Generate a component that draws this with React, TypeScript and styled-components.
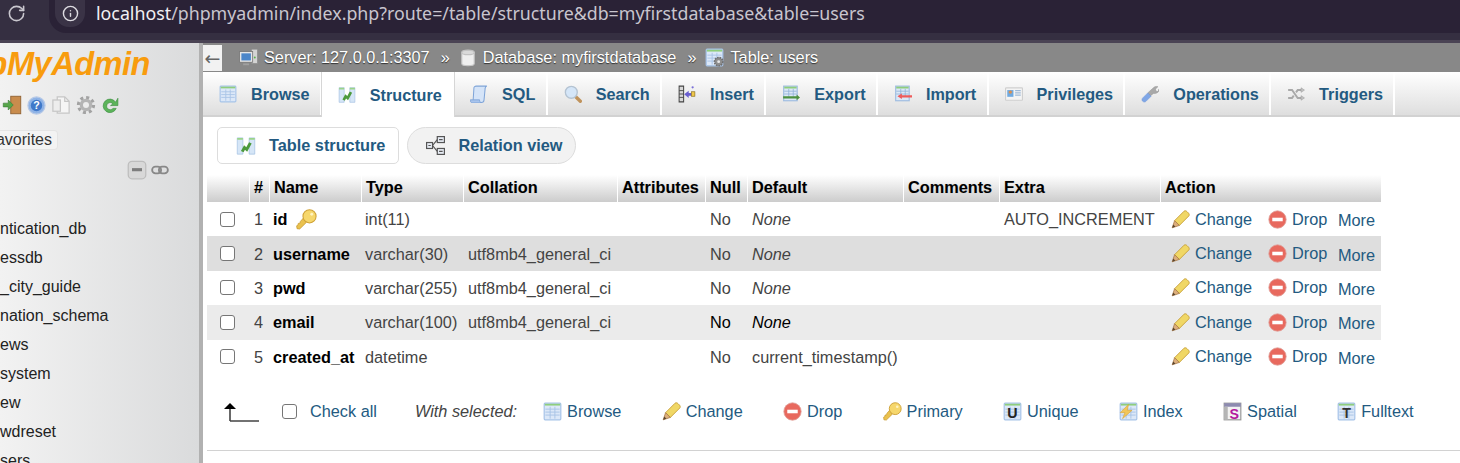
import React from 'react';
import styled, { createGlobalStyle } from 'styled-components';
import { Info, RotateCw } from 'lucide-react';

const GlobalStyle = createGlobalStyle`
    html, body {
        margin: 0;
        padding: 0;
        background: #fff;
        overflow: hidden;
    }
    body {
        font-family: "Liberation Sans", Arial, sans-serif;
        font-size: 16.3px;
    }
`;

const Page = styled.div`
    width: 1460px;
    height: 463px;
    overflow: hidden;
    display: flex;
    flex-direction: column;
`;

const BrowserBar = styled.div`
    height: 40px;
    border-bottom: 3px solid #4a4354;
    background: #352f41;
    display: flex;
    align-items: flex-start;
    flex-shrink: 0;
`;

const ReloadButton = styled.div`
    width: 49px;
    height: 27px;
    padding-left: 7px;
    display: flex;
    align-items: center;
    color: #c9c7ce;
    box-sizing: border-box;
`;

const UrlPill = styled.div`
    flex: 1;
    height: 33px;
    background: #2a2236;
    border-radius: 0 0 0 17px;
    display: flex;
    align-items: flex-start;
    padding-left: 6px;
`;

const InfoBadge = styled.div`
    width: 30px;
    height: 27px;
    border-radius: 0 0 14px 14px;
    background: #3a3346;
    color: #dedce2;
    display: flex;
    align-items: center;
    justify-content: center;
    margin-right: 11px;
`;

const UrlText = styled.div`
    font-family: "Noto Sans", sans-serif;
    font-size: 17.8px;
    line-height: 27px;
    color: #c8c5ce;
    white-space: nowrap;
    b {
        font-weight: 400;
        color: #f1f0f3;
    }
`;

const Body = styled.div`
    flex: 1;
    display: flex;
    min-height: 0;
`;

const Sidebar = styled.aside`
    width: 199px;
    flex-shrink: 0;
    border-right: 4px solid #b1b1b1;
    background: linear-gradient(90deg, #f2f2f2, #dadbdc);
    overflow: hidden;
    display: flex;
    flex-direction: column;
    font-size: 16px;
`;

const Logo = styled.div`
    height: 38px;
    margin-top: 2px;
    padding-right: 49px;
    display: flex;
    justify-content: flex-end;
    align-items: center;
    font-size: 32.6px;
    font-weight: 700;
    font-style: italic;
    letter-spacing: -0.5px;
    color: #f89c0e;
    white-space: nowrap;
`;

const QuickIcons = styled.div`
    display: flex;
    gap: 5px;
    margin: 12px 0 0 2px;
    height: 22px;
    align-items: center;
`;

const FavoritesButton = styled.div`
    width: 58px;
    height: 29px;
    margin-top: 15px;
    box-sizing: border-box;
    background: #f3f3f3;
    border: 1px solid #e4e4e4;
    border-left: none;
    border-radius: 0 4px 4px 0;
    display: flex;
    align-items: center;
    justify-content: flex-end;
    padding-right: 5px;
    color: #333;
`;

const TreeControls = styled.div`
    display: flex;
    gap: 4px;
    margin: 10px 0 0 127px;
    height: 20px;
    align-items: center;
`;

const DbList = styled.ul`
    list-style: none;
    margin: 34px 0 0;
    padding: 0;
`;

const DbItem = styled.li`
    height: 29px;
    line-height: 29px;
    color: #222;
    white-space: nowrap;
`;

const Main = styled.main`
    flex: 1;
    min-width: 0;
    display: flex;
    flex-direction: column;
`;

const TopBar = styled.div`
    height: 29px;
    background: #888;
    display: flex;
    align-items: center;
    flex-shrink: 0;
    color: #fff;
    text-shadow: 0 1px 1px #333;
`;

const CollapseArrow = styled.div`
    width: 19px;
    height: 26px;
    background: #f2f2f2;
    color: #666;
    text-shadow: none;
    font-family: "DejaVu Sans", sans-serif;
    font-size: 19px;
    line-height: 26px;
    display: flex;
    align-items: center;
    justify-content: center;
    overflow: hidden;
    margin-right: 17px;
`;

const Crumb = styled.div`
    display: flex;
    align-items: center;
    gap: 6px;
    white-space: nowrap;
`;

const CrumbSep = styled.span`
    margin: 0 9px 0 11px;
`;

const TabBar = styled.nav`
    height: 45px;
    display: flex;
    background: linear-gradient(#fff, #dedede);
    border-bottom: 2px solid #d2d2d2;
    box-sizing: border-box;
    flex-shrink: 0;
    font-size: 16.2px;
`;

const Tab = styled.div<{ $active?: boolean }>`
    display: flex;
    align-items: center;
    gap: 14px;
    padding: 1px 10.3px 0 16px;
    box-sizing: border-box;
    border-right: 2px solid #fff;
    font-weight: 700;
    color: #235a81;
    white-space: nowrap;
    background: ${props => (props.$active ? '#fff' : 'transparent')};
    height: ${props => (props.$active ? '45px' : '43px')};
    box-shadow: ${props => (props.$active ? '-1px 0 0 #d6d6d6, 1px 0 0 #d6d6d6' : 'none')};
    z-index: ${props => (props.$active ? 1 : 0)};
`;

const SubTabs = styled.div`
    display: flex;
    gap: 8px;
    margin: 10px 0 0 14px;
`;

const SubTab = styled.div<{ $pill?: boolean }>`
    height: 37px;
    box-sizing: border-box;
    display: flex;
    align-items: center;
    gap: 13px;
    padding: 0 13px 0 18px;
    border: 1px solid #ddd;
    border-radius: ${props => (props.$pill ? '19px' : '5px')};
    background: ${props => (props.$pill ? '#f2f2f2' : '#fff')};
    font-weight: 700;
    color: #235a81;
`;

const COLUMNS = '42px 20px 92px 102px 154px 88px 42px 156px 96px 161px 221px';

const Table = styled.div`
    margin: 11px 0 0 4px;
    width: 1174px;
`;

const HeadRow = styled.div`
    display: grid;
    grid-template-columns: ${COLUMNS};
    height: 27px;
`;

const HeadCell = styled.div`
    display: flex;
    align-items: center;
    padding: 0 0 2px 4px;
    font-weight: 700;
    color: #000;
    background: linear-gradient(#fff, #ccc);
    border-left: 1px solid #fff;
    white-space: nowrap;
    text-shadow: 0 0 1px rgba(0, 0, 0, 0.15);
    box-sizing: border-box;
    &:first-child {
        border-left: none;
    }
`;

const Row = styled.div<{ $bg: string }>`
    display: grid;
    grid-template-columns: ${COLUMNS};
    height: 34.4px;
    background: ${props => props.$bg};
    color: #444;
`;

const Cell = styled.div<{ $bold?: boolean; $italic?: boolean; $dark?: boolean; $tight?: boolean }>`
    display: flex;
    align-items: center;
    padding: 1px 0 0 ${props => (props.$tight ? 4 : 5)}px;
    white-space: nowrap;
    font-weight: ${props => (props.$bold ? 700 : 400)};
    font-style: ${props => (props.$italic ? 'italic' : 'normal')};
    color: ${props => (props.$bold || props.$dark ? '#000' : 'inherit')};
`;

const CheckCell = styled.div`
    display: flex;
    align-items: center;
    padding-left: 13px;
`;

const Check = styled.input.attrs({ type: 'checkbox' })`
    appearance: none;
    width: 15px;
    height: 15px;
    margin: 0;
    background: #fff;
    border: 1px solid #767676;
    border-radius: 3px;
    box-sizing: border-box;
    flex-shrink: 0;
`;

const KeyMark = styled.span`
    display: flex;
    margin-left: 9px;
`;

const ActionCell = styled.div`
    display: flex;
    align-items: center;
    padding-left: 11px;
    color: #235a81;
    white-space: nowrap;
`;

const ActionLink = styled.span<{ $width: number }>`
    display: flex;
    align-items: center;
    gap: 5px;
    width: ${props => props.$width}px;
`;

const MoreLink = styled.span`
    margin-top: 3px;
`;

const BulkBar = styled.div`
    display: flex;
    align-items: center;
    height: 30px;
    margin: 23px 0 0 4px;
    padding: 0 0 0 16px;
    color: #235a81;
    white-space: nowrap;
`;

const CheckAll = styled.label`
    display: flex;
    align-items: center;
    gap: 13px;
    margin: 0 38px 0 23px;
`;

const WithSelected = styled.em`
    color: #444;
    margin-right: 26px;
`;

const BulkActions = styled.div`
    display: flex;
    gap: 40.3px;
`;

const BulkAction = styled.span`
    display: flex;
    align-items: center;
    gap: 5px;
`;

const BottomRule = styled.div`
    height: 1px;
    background: #d2d2d2;
    margin: 23px 0 0 4px;
`;

const tableGrid = (
    <>
        <rect x="1" y="1" width="14" height="14" rx="0.8" fill="#dce8f8" stroke="#a6c3e8" />
        <rect x="1.5" y="1.5" width="13" height="1.5" fill="#8fce7d" />
        <path d="M2 6h12M2 8.500h12M2 11h12M6 4v10M10 4v10" stroke="#a9c4e6" strokeWidth="0.8" />
    </>
);

const ICONS: Record<string, React.ReactNode> = {
    browse: tableGrid,
    structure: (
        <>
            <path d="M1 1.500h4.500v13H1zM10.500 1.500H15v13h-4.500z" fill="#d6e6f7" stroke="#a5c1e3" strokeWidth="0.6" />
            <path d="M1 1.500h4.500V3H1zM10.500 1.500H15V3h-4.500z" fill="#9ad488" />
            <path d="M5 12.500l1.800-3.300 1.800 1.600L11.500 5.500" fill="none" stroke="#4c9a3c" strokeWidth="2.4" />
        </>
    ),
    sql: (
        <>
            <path d="M3.500 2.500c0-1 1-1.500 2-1.500H15c-1 0-1.500.8-1.500 1.800L12.500 13c0 1.500-1 2.500-2.500 2.500H1.500c1 0 1.300-1 1.300-2z" fill="#d5e4f8" stroke="#7ea4d8" strokeWidth="0.9" />
            <path d="M1.500 15.500c-1 0-1.500-1-1.200-2.300h8.200c-.2 1.300.5 2.300 1.500 2.300" fill="#a9c4ec" stroke="#7ea4d8" strokeWidth="0.8" />
        </>
    ),
    search: (
        <>
            <path d="M10 10l4.500 4.500" stroke="#c0935c" strokeWidth="3" strokeLinecap="round" />
            <circle cx="6.5" cy="6.5" r="5.3" fill="#d5e6f8" stroke="#b4c3d2" strokeWidth="1.2" />
        </>
    ),
    insert: (
        <>
            <path d="M1 1h4v14H1z" fill="#d8d8d8" stroke="#444" strokeWidth="0.9" />
            <path d="M1 5h4M1 8h4M1 11h4" stroke="#444" strokeWidth="0.8" />
            <path d="M9.500 5v2H12v2.500H9.500v2L5.500 8.200z" fill="#6a5fd0" />
            <rect x="12" y="6" width="3" height="4" fill="#f1c74a" stroke="#8a7120" strokeWidth="0.6" />
            <circle cx="13" cy="2" r="1" fill="#7a6fd8" />
        </>
    ),
    export: (
        <>
            <rect x="1.5" y="1" width="12" height="13" fill="#dbe8f7" stroke="#9dbbe0" />
            <rect x="2" y="1.5" width="11" height="1.6" fill="#8fce7d" />
            <path d="M2 5.500h11M2 8h11M6 3.500v7M10 3.500v7" stroke="#8fb0d8" strokeWidth="0.7" />
            <path d="M1 10h12V8.500l3 2.500-3 2.500V12H1z" fill="#4d9140" />
        </>
    ),
    import: (
        <>
            <rect x="1.5" y="1" width="12" height="13" fill="#dbe8f7" stroke="#9dbbe0" />
            <rect x="2" y="1.5" width="11" height="1.6" fill="#8fce7d" />
            <path d="M2 5.500h11M2 8h11M6 3.500v7M10 3.500v7" stroke="#8fb0d8" strokeWidth="0.7" />
            <path d="M16 9H7V7.500L3 10l4 2.500V11h9z" fill="#ee5b5b" />
        </>
    ),
    privileges: (
        <>
            <rect x="0.5" y="2.5" width="15" height="11" rx="0.5" fill="#f4f4f4" stroke="#cfcfcf" />
            <rect x="2" y="4.5" width="5.5" height="6" fill="#6fa9e0" />
            <circle cx="4.7" cy="6.3" r="1.5" fill="#d98f4f" />
            <path d="M9 5h5M9 7h5M9 9h5" stroke="#9fb9d6" strokeWidth="0.9" />
        </>
    ),
    operations: (
        <>
            <path d="M6 7L11 2.500c1-1 2.500-1.500 4-1l-2.200 2.200.6 1.800 1.800.5L16 3.500c.4 2-1.500 4.500-5 4L8 10z" fill="#a9a9a9" stroke="#8a8a8a" strokeWidth="0.4" />
            <path d="M1.500 11.500L6 7l3 3-4.500 4.500c-1 1-2.200.8-3 0s-1-2 0-3z" fill="#7fa6e6" stroke="#6e94d6" strokeWidth="0.4" />
        </>
    ),
    triggers: (
        <>
            <path d="M1 4.500h3.500l5 7H13M1 11.500h3.500l1.500-2M8 6.500l1.500-2H13" fill="none" stroke="#a9a9a9" strokeWidth="1.7" />
            <path d="M12.500 2.500l3 2-3 2zM12.500 9.500l3 2-3 2z" fill="#c4c4c4" stroke="#999" strokeWidth="0.5" />
        </>
    ),
    relation: (
        <>
            <rect x="0.5" y="5.5" width="5" height="5" fill="#e8edf5" stroke="#555" />
            <rect x="9.5" y="0.5" width="6" height="5" fill="#e8edf5" stroke="#555" />
            <rect x="9.5" y="10.5" width="6" height="5" fill="#e8edf5" stroke="#555" />
            <path d="M5.500 8L9.500 3M5.500 8l4 5" stroke="#555" fill="none" />
            <path d="M11 3h3M11 13h3M2 8h2" stroke="#555" />
        </>
    ),
    key: (
        <>
            <path d="M7.800 10.300L2.800 15.200l-2-.2-.3-2.200 1-.5.2-1.300 1.400-.2.200-1.300L6 6.500z" fill="#eac24e" stroke="#c89a30" strokeWidth="0.6" />
            <circle cx="10.3" cy="5.6" r="5" fill="#f6d76c" stroke="#cfa136" strokeWidth="0.8" />
            <circle cx="12" cy="4" r="1.1" fill="#fff3c2" />
        </>
    ),
    pencil: (
        <>
            <path d="M3 9l8-8c.8-.6 1.700-.4 2.500.4l1.200 1.200c.7.800.9 1.700.3 2.400l-8 8z" fill="#f0d765" stroke="#c9a23c" strokeWidth="0.8" />
            <path d="M3 9l4 4-6 2z" fill="#dcae7c" stroke="#a27240" strokeWidth="0.6" />
            <path d="M1 15l.9-2.700 1.800 1.800z" fill="#5c4630" />
        </>
    ),
    drop: (
        <>
            <circle cx="8" cy="8" r="7.3" fill="#e8695e" stroke="#e0a09a" strokeWidth="0.7" />
            <rect x="3.6" y="6.5" width="8.8" height="3" fill="#fff" />
        </>
    ),
    unique: (
        <>
            {tableGrid}
            <text x="8" y="13.500" textAnchor="middle" fontFamily="Liberation Sans" fontWeight="700" fontSize="12" fill="#222">U</text>
        </>
    ),
    index: (
        <>
            {tableGrid}
            <path d="M8 2L1 9h4l-2 5 8-7H7z" fill="#f2c65a" stroke="#d9a437" strokeWidth="0.5" />
        </>
    ),
    spatial: (
        <>
            <rect x="1" y="1" width="14" height="14" fill="#f2f2f2" stroke="#999" />
            <rect x="1" y="1" width="14" height="3" fill="#8d8bb0" />
            <rect x="1" y="4" width="3" height="11" fill="#b5b5b5" />
            <text x="9.5" y="14" textAnchor="middle" fontFamily="Liberation Sans" fontWeight="700" fontSize="12" fill="#b5189e">S</text>
        </>
    ),
    fulltext: (
        <>
            {tableGrid}
            <text x="8" y="13.500" textAnchor="middle" fontFamily="Liberation Sans" fontWeight="700" fontSize="12" fill="#333">T</text>
        </>
    ),
    server: (
        <>
            <rect x="10.5" y="1" width="5" height="12" fill="#d4d4d4" stroke="#8d8d8d" strokeWidth="0.6" />
            <rect x="0.5" y="3" width="11" height="9" fill="#e6e6e6" stroke="#777" strokeWidth="0.7" />
            <rect x="2" y="4.5" width="8" height="6" fill="#4c86c9" />
            <path d="M3.500 13h5v1.500h-5z" fill="#a0a0a0" />
            <circle cx="13.3" cy="8" r="0.8" fill="#59b04e" />
        </>
    ),
    database: (
        <>
            <path d="M2.500 3v10c0 2.300 11 2.300 11 0V3z" fill="#efefef" stroke="#c7c7c7" />
            <ellipse cx="8" cy="3" rx="5.5" ry="2" fill="#dadada" stroke="#c2c2c2" />
        </>
    ),
    tableGear: (
        <>
            {tableGrid}
            <circle cx="11.5" cy="11.5" r="3.5" fill="#8e8e8e" stroke="#6f6f6f" strokeWidth="1.3" strokeDasharray="1.4 0.7" />
            <circle cx="11.5" cy="11.5" r="1.2" fill="#e8e8e8" />
        </>
    ),
    exit: (
        <>
            <rect x="7" y="1" width="8" height="14" fill="#c98c4d" stroke="#8f6030" strokeWidth="0.7" />
            <path d="M1 6.500h4V4l4 4-4 4V9.500H1z" fill="#56a64a" stroke="#3a7a33" strokeWidth="0.5" />
        </>
    ),
    help: (
        <>
            <circle cx="8" cy="8" r="7.2" fill="#8fb3e6" stroke="#b7c9e6" />
            <circle cx="8" cy="8" r="4.8" fill="#3f78c9" />
            <text x="8" y="11.200" textAnchor="middle" fontFamily="Liberation Sans" fontWeight="700" fontSize="9" fill="#fff">?</text>
        </>
    ),
    docs: (
        <>
            <path d="M5 1.500h6l3.500 3.500v9.500H5z" fill="#f5f5f5" stroke="#c6c6c6" />
            <rect x="1.5" y="4" width="6" height="9" fill="#ededed" stroke="#c6c6c6" />
            <path d="M11 1.500V5h3.500" fill="none" stroke="#c6c6c6" />
        </>
    ),
    gear: (
        <>
            <circle cx="8" cy="8" r="6" fill="none" stroke="#a3a3a3" strokeWidth="2.6" strokeDasharray="2.4 2.3" />
            <circle cx="8" cy="8" r="5" fill="#b4b4b4" />
            <circle cx="8" cy="8" r="2.4" fill="#ececec" />
        </>
    ),
    reload: (
        <path d="M13 5.500A6 6 0 1 0 13.500 11h-2.800a3.200 3.200 0 1 1 0-4L8.500 8.500H15V2z" fill="#5cb45a" stroke="#3d8f41" strokeWidth="0.6" />
    ),
    collapse: (
        <>
            <rect x="1" y="1" width="14" height="14" rx="3" fill="#d8d8d8" stroke="#bdbdbd" />
            <rect x="4" y="6.5" width="8" height="2.5" fill="#7d7d7d" />
        </>
    ),
    link: (
        <>
            <rect x="1" y="5" width="8" height="6" rx="3" fill="none" stroke="#888" strokeWidth="1.6" />
            <rect x="7" y="5" width="8" height="6" rx="3" fill="none" stroke="#888" strokeWidth="1.6" />
        </>
    ),
};

const Icon = ({ name, size = 18 }: { name: string; size?: number }) => (
    <svg width={size} height={size} viewBox="0 0 16 16" style={{ flexShrink: 0 }}>
        {ICONS[name]}
    </svg>
);

const TABS = [
    { label: 'Browse', icon: 'browse' },
    { label: 'Structure', icon: 'structure', active: true },
    { label: 'SQL', icon: 'sql' },
    { label: 'Search', icon: 'search' },
    { label: 'Insert', icon: 'insert' },
    { label: 'Export', icon: 'export' },
    { label: 'Import', icon: 'import' },
    { label: 'Privileges', icon: 'privileges' },
    { label: 'Operations', icon: 'operations' },
    { label: 'Triggers', icon: 'triggers' },
];

const HEADERS = ['', '#', 'Name', 'Type', 'Collation', 'Attributes', 'Null', 'Default', 'Comments', 'Extra', 'Action'];

const COLS = [
    { num: 1, name: 'id', type: 'int(11)', collation: '', def: 'None', extra: 'AUTO_INCREMENT', key: true, bg: '#fff' },
    { num: 2, name: 'username', type: 'varchar(30)', collation: 'utf8mb4_general_ci', def: 'None', extra: '', bg: '#dedede' },
    { num: 3, name: 'pwd', type: 'varchar(255)', collation: 'utf8mb4_general_ci', def: 'None', extra: '', bg: '#fff' },
    { num: 4, name: 'email', type: 'varchar(100)', collation: 'utf8mb4_general_ci', def: 'None', extra: '', bg: '#ebebeb', dark: true },
    { num: 5, name: 'created_at', type: 'datetime', collation: '', def: 'current_timestamp()', extra: '', bg: '#fff' },
];

const DBS = ['ntication_db', 'essdb', '_city_guide', 'nation_schema', 'ews', 'system', 'ew', 'wdreset', 'sers'];

const BULK = [
    { label: 'Browse', icon: 'browse' },
    { label: 'Change', icon: 'pencil' },
    { label: 'Drop', icon: 'drop' },
    { label: 'Primary', icon: 'key' },
    { label: 'Unique', icon: 'unique' },
    { label: 'Index', icon: 'index' },
    { label: 'Spatial', icon: 'spatial' },
    { label: 'Fulltext', icon: 'fulltext' },
];

export default function App() {
    return (
        <Page>
            <GlobalStyle />
            <BrowserBar>
                <ReloadButton>
                    <RotateCw size={19} strokeWidth={2} />
                </ReloadButton>
                <UrlPill>
                    <InfoBadge>
                        <Info size={17} strokeWidth={2} />
                    </InfoBadge>
                    <UrlText>
                        <b>localhost</b>/phpmyadmin/index.php?route=/table/structure&amp;db=myfirstdatabase&amp;table=users
                    </UrlText>
                </UrlPill>
            </BrowserBar>
            <Body>
                <Sidebar>
                    <Logo>phpMyAdmin</Logo>
                    <QuickIcons>
                        <Icon name="exit" size={20} />
                        <Icon name="help" size={19} />
                        <Icon name="docs" size={20} />
                        <Icon name="gear" size={20} />
                        <Icon name="reload" size={18} />
                    </QuickIcons>
                    <FavoritesButton>avorites</FavoritesButton>
                    <TreeControls>
                        <Icon name="collapse" size={20} />
                        <Icon name="link" size={18} />
                    </TreeControls>
                    <DbList>
                        {DBS.map(db => (
                            <DbItem key={db}>{db}</DbItem>
                        ))}
                    </DbList>
                </Sidebar>
                <Main>
                    <TopBar>
                        <CollapseArrow>←</CollapseArrow>
                        <Crumb>
                            <Icon name="server" size={19} />
                            Server: 127.0.0.1:3307
                        </Crumb>
                        <CrumbSep>»</CrumbSep>
                        <Crumb>
                            <Icon name="database" size={18} />
                            Database: myfirstdatabase
                        </Crumb>
                        <CrumbSep>»</CrumbSep>
                        <Crumb>
                            <Icon name="tableGear" size={19} />
                            Table: users
                        </Crumb>
                    </TopBar>
                    <TabBar>
                        {TABS.map(tab => (
                            <Tab key={tab.label} $active={tab.active}>
                                <Icon name={tab.icon} />
                                {tab.label}
                            </Tab>
                        ))}
                    </TabBar>
                    <SubTabs>
                        <SubTab>
                            <Icon name="structure" size={20} />
                            Table structure
                        </SubTab>
                        <SubTab $pill>
                            <Icon name="relation" size={19} />
                            Relation view
                        </SubTab>
                    </SubTabs>
                    <Table>
                        <HeadRow>
                            {HEADERS.map((header, i) => (
                                <HeadCell key={i}>{header}</HeadCell>
                            ))}
                        </HeadRow>
                        {COLS.map(col => (
                            <Row key={col.num} $bg={col.bg}>
                                <CheckCell>
                                    <Check />
                                </CheckCell>
                                <Cell>{col.num}</Cell>
                                <Cell $bold $tight>
                                    {col.name}
                                    {col.key && (
                                        <KeyMark>
                                            <Icon name="key" size={21} />
                                        </KeyMark>
                                    )}
                                </Cell>
                                <Cell $tight>{col.type}</Cell>
                                <Cell>{col.collation}</Cell>
                                <Cell />
                                <Cell $dark={col.dark}>No</Cell>
                                <Cell $italic={col.def === 'None'} $dark={col.dark}>
                                    {col.def}
                                </Cell>
                                <Cell />
                                <Cell>{col.extra}</Cell>
                                <ActionCell>
                                    <ActionLink $width={97}>
                                        <Icon name="pencil" size={19} />
                                        Change
                                    </ActionLink>
                                    <ActionLink $width={70}>
                                        <Icon name="drop" size={19} />
                                        Drop
                                    </ActionLink>
                                    <MoreLink>More</MoreLink>
                                </ActionCell>
                            </Row>
                        ))}
                    </Table>
                    <BulkBar>
                        <svg width="36" height="22" viewBox="0 0 36 22">
                            <path d="M7 20V8M7 20h29" stroke="#444" strokeWidth="1.6" fill="none" />
                            <path d="M1 8l6-6 6 6z" fill="#000" />
                        </svg>
                        <CheckAll>
                            <Check />
                            Check all
                        </CheckAll>
                        <WithSelected>With selected:</WithSelected>
                        <BulkActions>
                            {BULK.map(item => (
                                <BulkAction key={item.label}>
                                    <Icon name={item.icon} size={19} />
                                    {item.label}
                                </BulkAction>
                            ))}
                        </BulkActions>
                    </BulkBar>
                    <BottomRule />
                </Main>
            </Body>
        </Page>
    );
}
